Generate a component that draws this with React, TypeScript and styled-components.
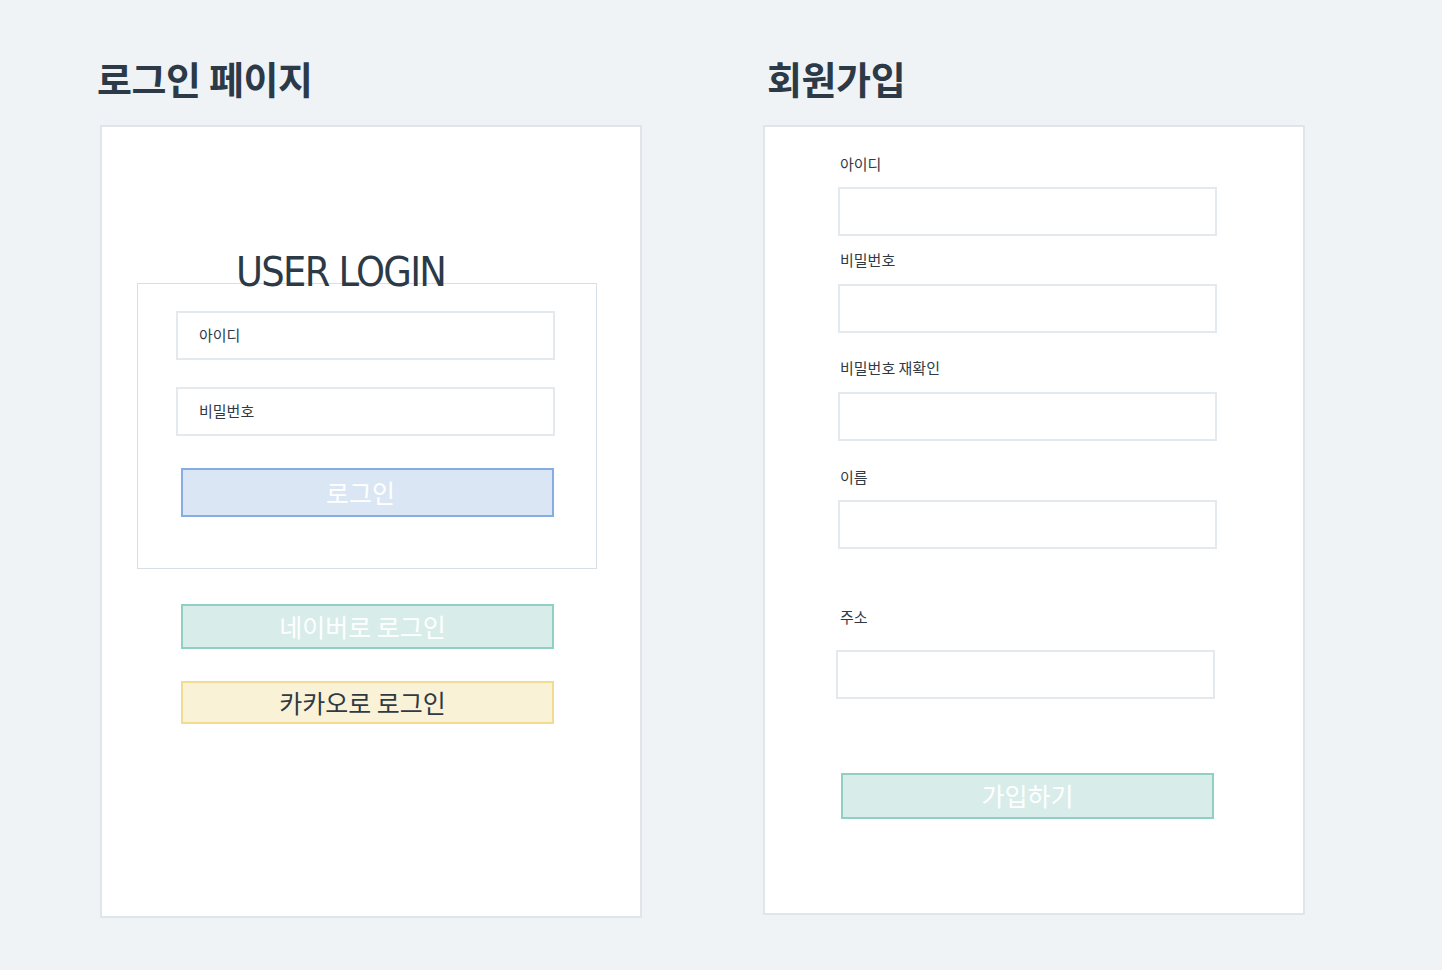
import React from "react";
import styled, { createGlobalStyle } from "styled-components";

const Global = createGlobalStyle`
  html, body { margin: 0; padding: 0; }
  body {
    background: #eff3f6;
    font-family: "Noto Sans CJK KR", "Noto Sans", sans-serif;
    color: #2f3b47;
  }
  * { box-sizing: border-box; }
`;

const Page = styled.div`
  display: flex;
  gap: 121px;
  padding: 49px 0 0 100px;
  min-height: 970px;
`;

const Column = styled.section`
  display: flex;
  flex-direction: column;
  width: 542px;
`;

const Title = styled.h1<{ $shift: number }>`
  margin: 0 0 19px ${(p) => p.$shift}px;
  font-family: "Noto Sans CJK KR", sans-serif;
  font-weight: 700;
  font-size: 38px;
  line-height: 57px;
  letter-spacing: -0.4px;
  color: #2c3a47;
`;

const Card = styled.div<{ $h: number }>`
  height: ${(p) => p.$h}px;
  background: #ffffff;
  border: 2px solid #dfe5ea;
  display: flex;
  flex-direction: column;
`;

const LoginCard = styled(Card)`
  padding: 125px 0 0 35px;
`;

const LoginHeading = styled.h2`
  margin: 0 0 -10px 99px;
  position: relative;
  z-index: 1;
  font-family: "DejaVu Sans Condensed", "DejaVu Sans", sans-serif;
  font-stretch: condensed;
  font-weight: 400;
  font-size: 41px;
  line-height: 41px;
  letter-spacing: -1.7px;
  color: #2c3a47;
`;

const LoginBox = styled.div`
  width: 460px;
  height: 286px;
  border: 1px solid #d6dfe6;
  padding: 27px 0 0 38px;
  display: flex;
  flex-direction: column;
  align-items: flex-start;
`;

const TextBox = styled.div<{ $mt?: number; $ml?: number }>`
  width: 379px;
  height: 49px;
  margin-top: ${(p) => p.$mt ?? 0}px;
  margin-left: ${(p) => p.$ml ?? 0}px;
  border: 2px solid #e4e9ee;
  background: #fff;
  display: flex;
  align-items: center;
  padding-left: 21px;
  padding-bottom: 2px;
  font-size: 15px;
  color: #2f3a45;
`;

type Tone = "blue" | "green" | "yellow";
const tones: Record<Tone, { bg: string; border: string; color: string }> = {
  blue: { bg: "#dbe6f5", border: "#86ade2", color: "#ffffff" },
  green: { bg: "#d8ede9", border: "#8fd0c3", color: "#ffffff" },
  yellow: { bg: "#faf2d7", border: "#f1dc92", color: "#2f3a45" },
};

const Button = styled.div<{ $tone: Tone; $h: number; $mt: number; $ml: number; $fs: number; $pr?: number }>`
  width: 373px;
  height: ${(p) => p.$h}px;
  margin-top: ${(p) => p.$mt}px;
  margin-left: ${(p) => p.$ml}px;
  background: ${(p) => tones[p.$tone].bg};
  border: 2px solid ${(p) => tones[p.$tone].border};
  color: ${(p) => tones[p.$tone].color};
  font-size: ${(p) => p.$fs}px;
  display: flex;
  align-items: center;
  justify-content: center;
  padding-bottom: 2px;
  padding-right: ${(p) => p.$pr ?? 0}px;
`;

const SignupCard = styled(Card)`
  padding: 27px 0 0 73px;
`;

const Label = styled.div<{ $mt: number }>`
  margin-top: ${(p) => p.$mt}px;
  margin-left: 2px;
  font-size: 15px;
  line-height: 20px;
  color: #2f3a45;
`;

const Field: React.FC<{ label: string; top: number; gap: number; shift?: number }> = ({ label, top, gap, shift = 0 }) => (
  <>
    <Label $mt={top}>{label}</Label>
    <TextBox $mt={gap} $ml={shift} />
  </>
);

export default function App() {
  return (
    <>
      <Global />
      <Page>
        <Column>
          <Title $shift={-3}>로그인 페이지</Title>
          <LoginCard $h={793}>
            <LoginHeading>USER LOGIN</LoginHeading>
            <LoginBox>
              <TextBox>아이디</TextBox>
              <TextBox $mt={27}>비밀번호</TextBox>
              <Button $tone="blue" $h={49} $mt={32} $ml={5} $fs={25} $pr={14}>로그인</Button>
            </LoginBox>
            <Button $tone="green" $h={45} $mt={35} $ml={44} $fs={25} $pr={10}>네이버로 로그인</Button>
            <Button $tone="yellow" $h={43} $mt={32} $ml={44} $fs={25} $pr={10}>카카오로 로그인</Button>
          </LoginCard>
        </Column>
        <Column>
          <Title $shift={4}>회원가입</Title>
          <SignupCard $h={790}>
            <Field label="아이디" top={0} gap={13} />
            <Field label="비밀번호" top={14} gap={14} />
            <Field label="비밀번호 재확인" top={25} gap={14} />
            <Field label="이름" top={26} gap={13} />
            <Field label="주소" top={58} gap={23} shift={-2} />
            <Button $tone="green" $h={46} $mt={74} $ml={3} $fs={25}>가입하기</Button>
          </SignupCard>
        </Column>
      </Page>
    </>
  );
}
